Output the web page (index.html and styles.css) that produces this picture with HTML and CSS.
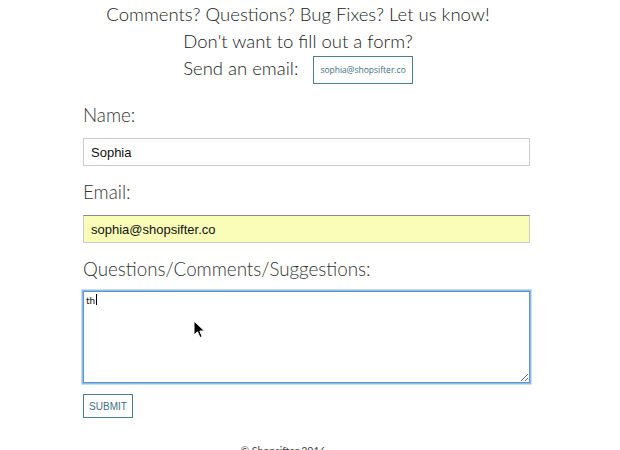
FILE: index.html
```html
<!DOCTYPE html>
<html lang="en">
<head>
  <meta charset="UTF-8">
  <title>Shopsifter - Contact</title>
  <link rel="stylesheet" href="styles.css">
</head>
<body>
  <div class="contact">
    <div class="intro">
      <p>Comments? Questions? Bug Fixes? Let us know!</p>
      <p>Don't want to fill out a form?</p>
      <p>Send an email: <a href="mailto:sophia@shopsifter.co" class="mail-btn">sophia@shopsifter.co</a></p>
    </div>

    <form class="contact-form">
      <label for="name">Name:</label>
      <input type="text" id="name" value="Sophia">

      <label for="email">Email:</label>
      <input type="email" id="email" class="filled" value="sophia@shopsifter.co">

      <label for="msg">Questions/Comments/Suggestions:</label>
      <div class="msg-wrap">
        <textarea id="msg" class="focused">th</textarea>
        <span class="caret"></span>
        <svg class="pointer" width="14" height="20" viewBox="0 0 14 20">
          <path d="M1 1 L1 15 L4.5 11.8 L7 17.5 L9.2 16.6 L6.8 11 L11.5 11 Z" fill="#000" stroke="#fff" stroke-width="1"/>
        </svg>
      </div>

      <button type="button" class="submit">SUBMIT</button>
    </form>

    <footer class="footer">&copy; Shopsifter 2016</footer>
  </div>
</body>
</html>
```

FILE: styles.css
```css
* {
  margin: 0;
  padding: 0;
  box-sizing: border-box;
}

body {
  background-color: #fff;
  color: #222;
  font-family: Lato, "Open Sans", sans-serif;
  font-weight: 300;
}

.contact {
  padding-left: 83px;
  width: 530px;
}

/* Intro block */
.intro {
  width: 430px;
  padding-top: 1px;
  text-align: center;
  font-size: 18.5px;
  line-height: 27px;
}

.mail-btn {
  display: inline-block;
  vertical-align: middle;
  margin-left: 10px;
  height: 28px;
  padding: 0 6px;
  border: 1px solid #4d7c8a;
  color: #41707f;
  font-family: "Open Sans", Lato, sans-serif;
  font-weight: 400;
  font-size: 8.5px;
  line-height: 26px;
  text-decoration: none;
}

/* Form */
.contact-form {
  display: flex;
  flex-direction: column;
  align-items: flex-start;
  margin-top: 19px;
}

.contact-form label {
  font-size: 18.8px;
  line-height: 24px;
  color: #333;
  margin-bottom: 11px;
}

.contact-form input {
  width: 447px;
  height: 28px;
  border: 1px solid #ccc;
  padding: 0 7px;
  margin-bottom: 14px;
  font-family: "Liberation Sans", Arial, sans-serif;
  font-size: 13px;
  color: #111;
  outline: none;
}

.contact-form input.filled {
  background-color: #fafdb8;
  border-top-color: #888;
}

.msg-wrap {
  position: relative;
  margin-top: -1px;
}

.contact-form textarea {
  display: block;
  width: 447px;
  height: 92px;
  border: 1px solid #5b95cc;
  box-shadow: 0 0 0 1.5px #8fbbe8;
  padding: 2px 2px;
  font-family: Lato, sans-serif;
  font-weight: 400;
  font-size: 10px;
  color: #111;
  resize: vertical;
  outline: none;
}

.caret {
  position: absolute;
  left: 13px;
  top: 3px;
  width: 1px;
  height: 11px;
  background-color: #000;
}

.pointer {
  position: absolute;
  left: 110px;
  top: 29px;
}

.submit {
  margin-top: 11px;
  width: 50px;
  height: 24px;
  background-color: #fff;
  border: 1px solid #4d7c8a;
  color: #41707f;
  font-family: "Liberation Sans", Arial, sans-serif;
  font-size: 10px;
  cursor: pointer;
}

.footer {
  width: 400px;
  margin-top: 27px;
  text-align: center;
  font-size: 10.5px;
  font-weight: 400;
  color: #444;
}
```
